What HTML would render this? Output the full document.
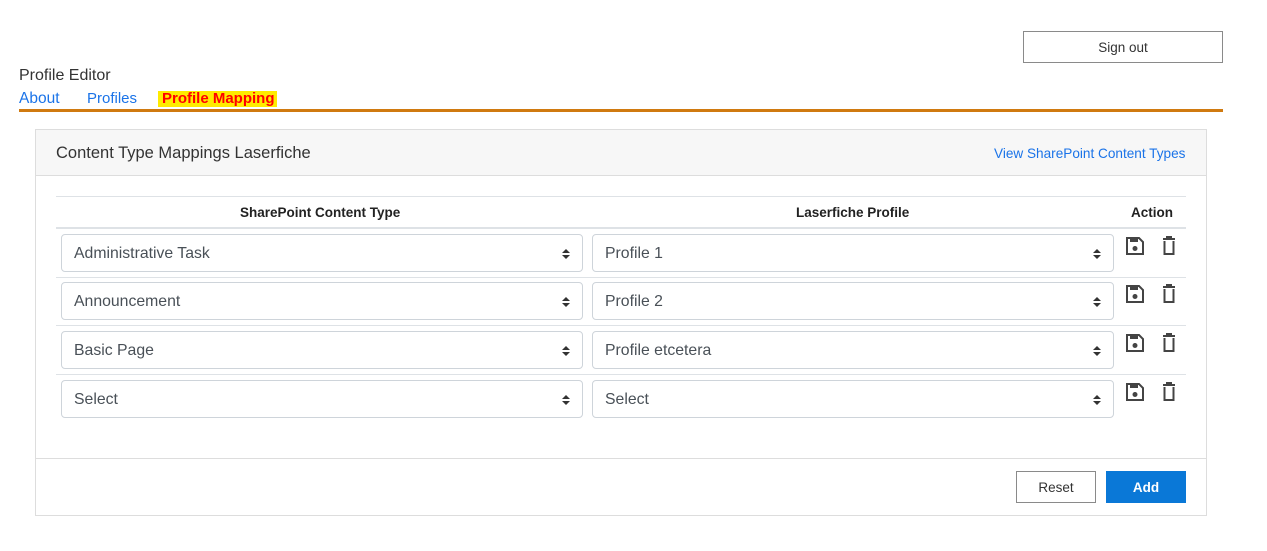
<!DOCTYPE html>
<html><head><style>
*{box-sizing:border-box;margin:0;padding:0}
body{width:1267px;height:551px;background:#fff;font-family:"Liberation Sans",sans-serif;color:#333;position:relative;overflow:hidden}
.abs{position:absolute}
.btn{position:absolute;border:1px solid #8a8a8a;background:#fff;font-size:13.5px;display:flex;align-items:center;justify-content:center;color:#333}
.sel{position:absolute;height:38px;border:1px solid #ced4da;border-radius:4px;font-size:15.8px;color:#495057;padding-left:12px;padding-top:1px;display:flex;align-items:center}
.arr{position:absolute;right:12px;top:13px;width:8px;height:12px}
.hl{position:absolute;height:1px;background:#dee2e6}
</style></head><body>
<div class="btn" style="left:1023px;top:31px;width:200px;height:32px">Sign out</div>
<div class="abs" style="left:19px;top:67px;font-size:16px;color:#333">Profile Editor</div>
<div class="abs" style="left:19px;top:90px;font-size:15.5px;color:#1a73e8">About</div>
<div class="abs" style="left:87px;top:90px;font-size:15px;color:#1a73e8">Profiles</div>
<div class="abs" style="left:158px;top:91px;width:119px;height:16px;background:#ffeb00"></div>
<div class="abs" style="left:162px;top:90px;font-size:15px;color:#f00;font-weight:bold">Profile Mapping</div>
<div class="abs" style="left:19px;top:109px;width:1204px;height:3px;background:#d07a10"></div>

<div class="abs" style="left:35px;top:129px;width:1172px;height:387px;border:1px solid #ddd"></div>
<div class="abs" style="left:36px;top:130px;width:1170px;height:46px;background:#f7f7f7;border-bottom:1px solid #ddd"></div>
<div class="abs" style="left:56px;top:144px;font-size:16.5px;color:#333">Content Type Mappings Laserfiche</div>
<div class="abs" style="left:994px;top:146px;font-size:13.6px;color:#1a73e8">View SharePoint Content Types</div>

<div class="hl" style="left:56px;top:196px;width:1130px"></div>
<div class="abs" style="left:240px;top:205px;font-size:13.5px;font-weight:bold;color:#222">SharePoint Content Type</div>
<div class="abs" style="left:796px;top:205px;font-size:13.5px;font-weight:bold;color:#222">Laserfiche Profile</div>
<div class="abs" style="left:1131px;top:205px;font-size:13.5px;font-weight:bold;color:#222">Action</div>
<div class="hl" style="left:56px;top:227px;width:1130px;height:2px"></div>
<div class="hl" style="left:56px;top:277px;width:1130px"></div>
<div class="hl" style="left:56px;top:325px;width:1130px"></div>
<div class="hl" style="left:56px;top:374px;width:1130px"></div>

<div class="sel" style="left:61px;top:234px;width:522px">Administrative Task<svg class="arr" viewBox="0 0 8 12"><path d="M0 5L4 1L8 5ZM0 7L4 11L8 7Z" fill="#333"/></svg></div>
<div class="sel" style="left:592px;top:234px;width:522px">Profile 1<svg class="arr" viewBox="0 0 8 12"><path d="M0 5L4 1L8 5ZM0 7L4 11L8 7Z" fill="#333"/></svg></div>
<div class="sel" style="left:61px;top:282px;width:522px">Announcement<svg class="arr" viewBox="0 0 8 12"><path d="M0 5L4 1L8 5ZM0 7L4 11L8 7Z" fill="#333"/></svg></div>
<div class="sel" style="left:592px;top:282px;width:522px">Profile 2<svg class="arr" viewBox="0 0 8 12"><path d="M0 5L4 1L8 5ZM0 7L4 11L8 7Z" fill="#333"/></svg></div>
<div class="sel" style="left:61px;top:331px;width:522px">Basic Page<svg class="arr" viewBox="0 0 8 12"><path d="M0 5L4 1L8 5ZM0 7L4 11L8 7Z" fill="#333"/></svg></div>
<div class="sel" style="left:592px;top:331px;width:522px">Profile etcetera<svg class="arr" viewBox="0 0 8 12"><path d="M0 5L4 1L8 5ZM0 7L4 11L8 7Z" fill="#333"/></svg></div>
<div class="sel" style="left:61px;top:380px;width:522px">Select<svg class="arr" viewBox="0 0 8 12"><path d="M0 5L4 1L8 5ZM0 7L4 11L8 7Z" fill="#333"/></svg></div>
<div class="sel" style="left:592px;top:380px;width:522px">Select<svg class="arr" viewBox="0 0 8 12"><path d="M0 5L4 1L8 5ZM0 7L4 11L8 7Z" fill="#333"/></svg></div>

<svg class="abs" style="left:1125px;top:236px" width="60" height="170" viewBox="0 0 60 170">
<defs>
<g id="ic">
<path d="M2 2H14L18 6V18H2Z" fill="none" stroke="#444" stroke-width="2"/>
<rect x="5" y="3" width="8" height="3" fill="#444"/>
<circle cx="10" cy="12.5" r="2.5" fill="#444"/>
<path d="M38 3H50M42 3V1H46V3M39.5 5V18H48.5V5" fill="none" stroke="#444" stroke-width="2"/>
</g>
</defs>
<use href="#ic" y="0"/><use href="#ic" y="48"/><use href="#ic" y="97"/><use href="#ic" y="146"/>
</svg>

<div class="hl" style="left:36px;top:458px;width:1170px;background:#ddd"></div>
<div class="btn" style="left:1016px;top:471px;width:80px;height:32px">Reset</div>
<div class="btn" style="left:1106px;top:471px;width:80px;height:32px;background:#0a78d7;border-color:#0a78d7;color:#fff;font-weight:bold">Add</div>
</body></html>
